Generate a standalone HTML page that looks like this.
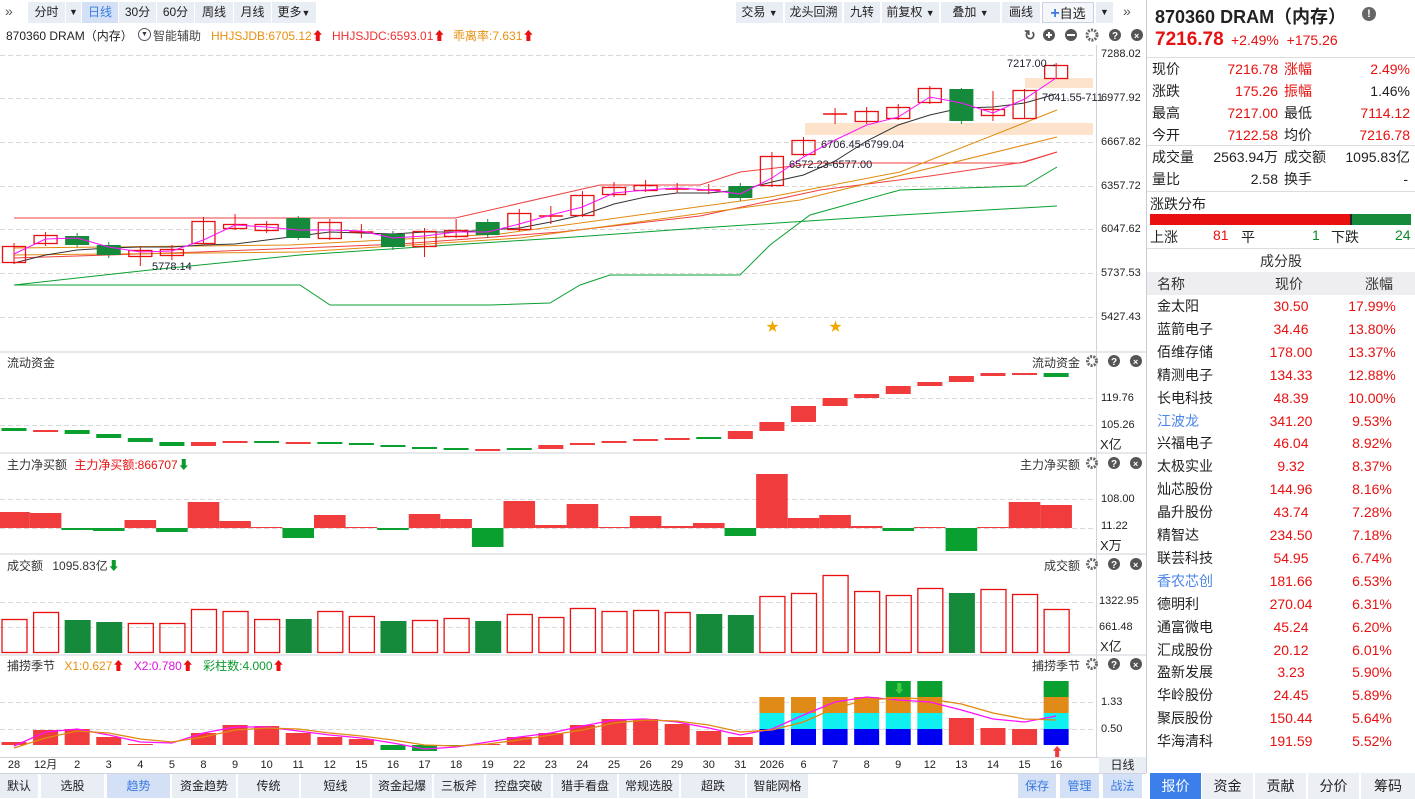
<!DOCTYPE html>
<html><head><meta charset="utf-8">
<style>
*{margin:0;padding:0;box-sizing:border-box}
body{width:1415px;height:799px;overflow:hidden;background:#fff;font-family:"Liberation Sans","Noto Sans CJK SC",sans-serif;font-size:12px;color:#222;position:relative}
.a{position:absolute;white-space:nowrap}
.tb{position:absolute;top:2px;height:21px;background:#e9edf4;font-size:12px;line-height:21px;text-align:center;color:#222}
.tb.on{background:#d3e0f6;color:#3b7be0}
.bt{position:absolute;top:774px;height:24px;background:#e9edf4;font-size:12px;line-height:24px;text-align:center;color:#222}
.bt.on{background:#d3e0f6;color:#3b7be0}
.rt{position:absolute;top:773px;height:26px;width:52px;background:#eceff4;font-size:14px;line-height:26px;text-align:center;color:#222;border-left:1px solid #fff}
.rt.on{background:#3d7fea;color:#fff}
.red{color:#e81010}.grn{color:#0a8a2c}
.row{position:absolute;left:1152px;width:260px;height:22px;font-size:14px;line-height:22px}
.row span{position:absolute}
.st{position:absolute;left:1147px;width:268px;height:23px;font-size:14px;line-height:23px}
.st span{position:absolute}
.dt{position:absolute;top:758px;width:40px;height:14px;line-height:14px;text-align:center;font-size:11px;white-space:nowrap;overflow:visible}
</style></head><body>

<div class="a" style="left:5px;top:3px;font-size:14px;color:#555">»</div>
<div class="tb" style="left:28px;width:37px">分时</div>
<div class="tb" style="left:66px;width:15px;font-size:9px">▼</div>
<div class="tb on" style="left:82px;width:36px">日线</div>
<div class="tb" style="left:119px;width:37px">30分</div>
<div class="tb" style="left:157px;width:37px">60分</div>
<div class="tb" style="left:195px;width:38px">周线</div>
<div class="tb" style="left:234px;width:37px">月线</div>
<div class="tb" style="left:272px;width:44px">更多<span style="font-size:9px">▼</span></div>

<div class="tb" style="left:736px;width:47px">交易 <span style="font-size:9px">▼</span></div>
<div class="tb" style="left:785px;width:57px">龙头回溯</div>
<div class="tb" style="left:844px;width:36px">九转</div>
<div class="tb" style="left:882px;width:57px">前复权 <span style="font-size:9px">▼</span></div>
<div class="tb" style="left:941px;width:59px">叠加 <span style="font-size:9px">▼</span></div>
<div class="tb" style="left:1002px;width:38px">画线</div>
<div class="tb" style="left:1042px;width:52px;background:#f4f6fa;border:1px solid #c8d2e2;font-size:13px"><span style="color:#3b7be0;font-size:16px;font-weight:bold">+</span>自选</div>
<div class="tb" style="left:1096px;width:17px;font-size:9px">▼</div>
<div class="a" style="left:1123px;top:3px;font-size:14px;color:#555">»</div>

<div class="a" style="left:6px;top:27px;font-size:12px">870360 DRAM（内存）</div>
<div class="a" style="left:138px;top:28px;width:13px;height:13px;border:1px solid #556;border-radius:50%;font-size:7px;line-height:11px;text-align:center;color:#334">▼</div>
<div class="a" style="left:153px;top:27px;color:#444">智能辅助</div>
<div class="a" style="left:211px;top:27px;color:#e89010">HHJSJDB:6705.12<span style="color:#e81010">⬆</span></div>
<div class="a" style="left:332px;top:27px;color:#f03030">HHJSJDC:6593.01<span style="color:#e81010">⬆</span></div>
<div class="a" style="left:453px;top:27px;color:#e89010">乖离率:7.631<span style="color:#e81010">⬆</span></div>

<svg class="a" style="left:0;top:0" width="1146" height="799" id="ch">
<g id="g"></g>
<g fill="#555">
<text x="1024" y="40" font-size="14" font-weight="bold" fill="#555">↻</text>
<circle cx="1049" cy="35" r="6"/><rect x="1046" y="34" width="6" height="2" fill="#fff"/><rect x="1048" y="32" width="2" height="6" fill="#fff"/>
<circle cx="1071" cy="35" r="6"/><rect x="1067" y="34" width="8" height="2" fill="#fff"/>
<circle cx="1092" cy="35" r="5" fill="none" stroke="#666" stroke-width="3" stroke-dasharray="2 1.2"/>
<circle cx="1115" cy="35" r="6"/><text x="1112" y="39" font-size="10" font-weight="bold" fill="#fff">?</text>
<circle cx="1137" cy="35" r="6"/><text x="1134" y="39" font-size="9" font-weight="bold" fill="#fff">×</text>
</g>
</svg>

<div class="a" style="left:1101px;top:48px;font-size:11px">7288.02</div>
<div class="a" style="left:1101px;top:92px;font-size:11px">6977.92</div>
<div class="a" style="left:1101px;top:136px;font-size:11px">6667.82</div>
<div class="a" style="left:1101px;top:180px;font-size:11px">6357.72</div>
<div class="a" style="left:1101px;top:223px;font-size:11px">6047.62</div>
<div class="a" style="left:1101px;top:267px;font-size:11px">5737.53</div>
<div class="a" style="left:1101px;top:311px;font-size:11px">5427.43</div>
<div class="a" style="left:1101px;top:392px;font-size:11px">119.76</div>
<div class="a" style="left:1101px;top:419px;font-size:11px">105.26</div>
<div class="a" style="left:1100px;top:434px;font-size:13px">X亿</div>
<div class="a" style="left:1101px;top:493px;font-size:11px">108.00</div>
<div class="a" style="left:1101px;top:520px;font-size:11px">11.22</div>
<div class="a" style="left:1100px;top:535px;font-size:13px">X万</div>
<div class="a" style="left:1099px;top:595px;font-size:11px">1322.95</div>
<div class="a" style="left:1099px;top:621px;font-size:11px">661.48</div>
<div class="a" style="left:1100px;top:636px;font-size:13px">X亿</div>
<div class="a" style="left:1101px;top:696px;font-size:11px">1.33</div>
<div class="a" style="left:1101px;top:723px;font-size:11px">0.50</div>

<div class="a" style="left:1007px;top:58px;font-size:11px;color:#223">7217.00→</div>
<div class="a" style="left:1042px;top:92px;font-size:11px;color:#223">7041.55-711</div>
<div class="a" style="left:821px;top:139px;font-size:11px;color:#223">6706.45-6799.04</div>
<div class="a" style="left:789px;top:159px;font-size:11px;color:#223">6572.23-6577.00</div>
<div class="a" style="left:152px;top:261px;font-size:11px;color:#223">5778.14</div>
<div class="a" style="left:766px;top:316px;font-size:13px;color:#f0a800">★</div>
<div class="a" style="left:829px;top:316px;font-size:13px;color:#f0a800">★</div>

<div class="a" style="left:7px;top:354px;color:#333">流动资金</div>
<div class="a" style="left:1032px;top:354px;color:#333">流动资金</div>
<div class="a" style="left:7px;top:456px;color:#333">主力净买额 <span class="red" style="margin-left:4px">主力净买额:866707</span><span style="color:#0a9a2c">⬇</span></div>
<div class="a" style="left:1020px;top:456px;color:#333">主力净买额</div>
<div class="a" style="left:7px;top:557px;color:#333">成交额 <span style="margin-left:6px">1095.83亿</span><span style="color:#0a9a2c">⬇</span></div>
<div class="a" style="left:1044px;top:557px;color:#333">成交额</div>
<div class="a" style="left:7px;top:657px;color:#333">捕捞季节 <span style="color:#e89010;margin-left:6px">X1:0.627</span><span class="red">⬆</span> <span style="color:#e010e0;margin-left:6px">X2:0.780</span><span class="red">⬆</span> <span style="color:#0a9a2c;margin-left:6px">彩柱数:4.000</span><span class="red">⬆</span></div>
<div class="a" style="left:1032px;top:657px;color:#333">捕捞季节</div>

<div id="dates"></div>
<div class="a" style="left:1099px;top:757px;width:47px;height:16px;background:#e9edf4;text-align:center;font-size:12px;line-height:16px">日线</div>

<div class="bt" style="left:0;width:38px">默认</div>
<div class="bt" style="left:41px;width:63px">选股</div>
<div class="bt on" style="left:107px;width:63px">趋势</div>
<div class="bt" style="left:172px;width:64px">资金趋势</div>
<div class="bt" style="left:238px;width:61px">传统</div>
<div class="bt" style="left:301px;width:69px">短线</div>
<div class="bt" style="left:372px;width:60px">资金起爆</div>
<div class="bt" style="left:434px;width:50px">三板斧</div>
<div class="bt" style="left:486px;width:65px">控盘突破</div>
<div class="bt" style="left:553px;width:64px">猎手看盘</div>
<div class="bt" style="left:619px;width:60px">常规选股</div>
<div class="bt" style="left:681px;width:64px">超跌</div>
<div class="bt" style="left:747px;width:61px">智能网格</div>
<div class="bt on" style="left:1018px;width:38px">保存</div>
<div class="bt on" style="left:1060px;width:39px">管理</div>
<div class="bt on" style="left:1103px;width:39px">战法</div>

<div class="a" style="left:1146px;top:0;width:1px;height:773px;background:#c8ccd4"></div>
<div class="a" style="left:1155px;top:3px;font-size:18px;font-weight:bold;color:#222">870360 DRAM（内存）</div>
<div class="a" style="left:1362px;top:7px;width:14px;height:14px;border-radius:50%;background:#666;color:#fff;font-size:11px;font-weight:bold;line-height:14px;text-align:center">!</div>
<div class="a" style="left:1155px;top:29px;font-size:19px;font-weight:bold;color:#e81010">7216.78</div>
<div class="a" style="left:1231px;top:32px;font-size:14px;color:#e81010">+2.49% &nbsp;+175.26</div>
<div class="a" style="left:1147px;top:57px;width:268px;height:1px;background:#ddd"></div>

<div class="row" style="top:58px"><span style="left:0">现价</span><span class="red" style="right:134px">7216.78</span><span class="red" style="left:132px">涨幅</span><span class="red" style="right:2px">2.49%</span></div>
<div class="row" style="top:80px"><span style="left:0">涨跌</span><span class="red" style="right:134px">175.26</span><span class="red" style="left:132px">振幅</span><span style="right:2px">1.46%</span></div>
<div class="row" style="top:102px"><span style="left:0">最高</span><span class="red" style="right:134px">7217.00</span><span style="left:132px">最低</span><span class="red" style="right:2px">7114.12</span></div>
<div class="row" style="top:124px"><span style="left:0">今开</span><span class="red" style="right:134px">7122.58</span><span style="left:132px">均价</span><span class="red" style="right:2px">7216.78</span></div>
<div class="a" style="left:1147px;top:145px;width:268px;height:1px;background:#ddd"></div>
<div class="row" style="top:146px"><span style="left:0">成交量</span><span style="right:134px">2563.94万</span><span style="left:132px">成交额</span><span style="right:2px">1095.83亿</span></div>
<div class="row" style="top:168px"><span style="left:0">量比</span><span style="right:134px">2.58</span><span style="left:132px">换手</span><span style="right:4px">-</span></div>
<div class="a" style="left:1147px;top:191px;width:268px;height:1px;background:#ddd"></div>
<div class="a" style="left:1150px;top:194px;font-size:14px">涨跌分布</div>
<div class="a" style="left:1150px;top:214px;width:200px;height:11px;background:#e81010"></div>
<div class="a" style="left:1350px;top:214px;width:2px;height:11px;background:#222"></div>
<div class="a" style="left:1352px;top:214px;width:59px;height:11px;background:#158a3a"></div>
<div class="a" style="left:1150px;top:227px;font-size:14px">上涨</div>
<div class="a red" style="left:1213px;top:227px;font-size:14px">81</div>
<div class="a" style="left:1241px;top:227px;font-size:14px">平</div>
<div class="a grn" style="left:1312px;top:227px;font-size:14px">1</div>
<div class="a" style="left:1331px;top:227px;font-size:14px">下跌</div>
<div class="a grn" style="left:1395px;top:227px;font-size:14px">24</div>
<div class="a" style="left:1147px;top:248px;width:268px;height:1px;background:#ddd"></div>
<div class="a" style="left:1147px;top:251px;width:268px;text-align:center;font-size:14px;color:#333">成分股</div>
<div class="a" style="left:1147px;top:272px;width:268px;height:23px;background:#eeeef0"></div>
<div class="a" style="left:1157px;top:274px;font-size:14px;color:#333">名称</div>
<div class="a" style="left:1275px;top:274px;font-size:14px;color:#333">现价</div>
<div class="a" style="left:1365px;top:274px;font-size:14px;color:#333">涨幅</div>
<div id="stocks"></div>

<div class="rt on" style="left:1149px">报价</div>
<div class="rt" style="left:1201px">资金</div>
<div class="rt" style="left:1254px">贡献</div>
<div class="rt" style="left:1307px">分价</div>
<div class="rt" style="left:1360px;width:55px">筹码</div>

<script>
var NS="http://www.w3.org/2000/svg",g=document.getElementById("g");
function el(t,a){var e=document.createElementNS(NS,t);for(var k in a)e.setAttribute(k,a[k]);g.appendChild(e);return e}
function X(i){return 14+i*31.58}
var R="#f03c3c",G="#158a3a",RG="#0aa030";
[352,453,554,655].forEach(function(y){el("rect",{x:0,y:y-1,width:1146,height:2,fill:"#e6e8ec"})});
el("rect",{x:1096,y:45,width:1,height:712,fill:"#d0d4da"});
el("rect",{x:0,y:757,width:1146,height:1,fill:"#d0d4da"});
el("rect",{x:0,y:773,width:1146,height:1,fill:"#d0d4da"});
[55,98,142,186,229,273,317,398,425,499,528,602,627,702,729].forEach(function(y){el("line",{x1:0,x2:1096,y1:y+.5,y2:y+.5,stroke:"#d8d8d8","stroke-dasharray":"5 3"})});
el("rect",{x:805,y:123,width:288,height:12,fill:"#fde3cc"});
el("rect",{x:1025,y:78,width:68,height:10,fill:"#fde3cc"});
function pl(p,c,w){el("polyline",{points:p,fill:"none",stroke:c,"stroke-width":w||1})}
pl("14,285 150,270 300,255 450,245 560,238 700,228 900,215 1057,206",RG);
pl("14,285 300,285 330,305 490,305 550,303 580,285 610,275 740,275 770,245 810,215 900,190 1025,186 1057,167",RG);
pl("14,218 455,218 600,185 700,185 740,172 820,163 1020,163 1057,152","#f04040");
pl("14,258 200,252 400,244 560,232 700,216 820,190 930,176 1025,162 1057,152","#f04040");
pl("14,248 290,245 500,234 770,197 900,172 1057,110","#e08a10");
pl("14,255 300,252 520,238 800,200 1057,137","#e08a10");
var bk=[263,255,250,248,247,247,245,244,240,236,232,233,234,232,232,230,228,222,215,204,197,193,193,190,182,175,161,141,125,115,108,107,103,94];
pl(bk.map(function(y,i){return X(i)+","+y}).join(" "),"#333");
var C=[[246,262,243,264,"r"],[235,243,232,246,"r"],[236,245,233,247,"g"],[245,255,242,258,"g"],[250,256,246,266,"r"],[249,255,245,260,"r"],[221,243,217,244,"r"],[224,228,214,230,"r"],[224,230,221,233,"r"],[218,238,216,240,"g"],[222,238,219,240,"r"],[231,233,224,238,"c"],[234,247,231,250,"g"],[231,246,228,257,"r"],[230,236,219,238,"r"],[222,235,219,238,"g"],[213,229,209,231,"r"],[215,217,206,224,"c"],[195,215,191,217,"r"],[187,194,182,197,"r"],[185,190,180,192,"r"],[188,190,183,193,"c"],[189,191,184,194,"c"],[186,198,183,201,"g"],[156,185,152,187,"r"],[140,154,137,156,"r"],[113,115,108,124,"c"],[111,121,107,124,"r"],[107,118,104,120,"r"],[88,102,86,104,"r"],[89,121,88,124,"g"],[109,115,91,121,"r"],[90,118,89,119,"r"],[65,78,63,78,"r"]];
C.forEach(function(c,i){var x=X(i);
 var col=c[4]=="g"?G:"#e81010";
 el("line",{x1:x,x2:x,y1:c[2],y2:c[3],stroke:col});
 if(c[4]=="g")el("rect",{x:x-12,y:c[0],width:24,height:c[1]-c[0],fill:G});
 else if(c[4]=="c")el("line",{x1:x-12,x2:x+12,y1:c[0]+1,y2:c[0]+1,stroke:col,"stroke-width":1.5});
 else el("rect",{x:x-11.5,y:c[0]+.5,width:23,height:c[1]-c[0],fill:"none",stroke:col,"stroke-width":1.3});
});
var mg=[254,239,238,247,252,251,240,225,227,230,230,231,238,236,232,232,224,215,207,193,190,188,190,194,178,157,140,125,117,97,103,113,99,78];
pl(mg.map(function(y,i){return X(i)+","+y}).join(" "),"#ff10ff");
var F=[[428,431,"g"],[430,431,"r"],[430,434,"g"],[434,438,"g"],[438,442,"g"],[442,446,"g"],[442,446,"r"],[441,442,"r"],[441,442,"g"],[442,444,"r"],[442,443,"g"],[443,445,"g"],[445,447,"g"],[447,448,"g"],[448,450,"g"],[449,450,"r"],[448,449,"g"],[445,449,"r"],[443,445,"r"],[441,443,"r"],[439,441,"r"],[438,439,"r"],[437,438,"g"],[431,439,"r"],[422,431,"r"],[406,422,"r"],[398,406,"r"],[394,398,"r"],[386,394,"r"],[382,386,"r"],[376,382,"r"],[373,376,"r"],[373,374,"r"],[373,377,"g"]];
F.forEach(function(f,i){el("rect",{x:X(i)-12.5,y:f[0],width:25,height:Math.max(2,f[1]-f[0]),fill:f[2]=="g"?RG:R})});
var N=[512,513,-530,-531,520,-532,502,521,527,-538,515,527,-530,514,519,-547,501,525,504,527,516,526,523,-536,474,518,515,526,-531,527,-551,527,502,505];
N.forEach(function(v,i){var x=X(i)-15.8;if(v>0)el("rect",{x:x,y:v,width:31.6,height:528-v,fill:R});else el("rect",{x:x,y:528,width:31.6,height:-v-528,fill:RG})});
var V=[619,612,-620,-622,623,623,609,611,619,-619,611,616,-621,620,618,-621,614,617,608,611,610,612,-614,-615,596,593,575,591,595,588,-593,589,594,609];
V.forEach(function(v,i){var x=X(i)-12.5;if(v>0)el("rect",{x:x+.5,y:v+.5,width:25,height:652-v,fill:"none",stroke:"#e81010","stroke-width":1.3});else el("rect",{x:x,y:-v,width:26,height:653+v,fill:G})});
var S=[742,730,729,737,744,745,733,725,726,733,737,739,-750,-751,-746,744,737,733,725,719,719,724,731,737,"s","s","s","s","S","S",718,728,729,"S"];
S.forEach(function(v,i){var x=X(i)-12.5;
 if(v=="s"||v=="S"){el("rect",{x:x,y:729,width:25,height:16,fill:"#0000f0"});el("rect",{x:x,y:713,width:25,height:16,fill:"#10f0f0"});el("rect",{x:x,y:697,width:25,height:16,fill:"#e08a18"});if(v=="S")el("rect",{x:x,y:681,width:25,height:16,fill:"#0aa030"});}
 else if(v>0)el("rect",{x:x,y:v,width:25,height:745-v,fill:R});
 else el("rect",{x:x,y:745,width:25,height:-v-745,fill:RG});
});
var m1=[746,732,729,735,742,743,733,727,727,731,735,738,743,749,747,742,737,733,726,720,719,722,728,735,729,715,702,697,700,702,710,719,722,716];
var m2=[748,738,731,733,739,742,737,730,728,729,733,736,740,745,746,744,740,735,730,723,720,721,725,732,730,722,708,700,698,699,704,713,719,720];
pl(m1.map(function(y,i){return X(i)+","+y}).join(" "),"#ff10ff",1.3);
pl(m2.map(function(y,i){return X(i)+","+y}).join(" "),"#e08a10",1.3);
el("text",{x:X(28)-5,y:693,fill:"#4c4","font-size":12,"font-weight":"bold"}).textContent="⬇";
el("text",{x:X(33)-5,y:756,fill:"#f03c3c","font-size":12,"font-weight":"bold"}).textContent="⬆";
var D=["28","12月","2","3","4","5","8","9","10","11","12","15","16","17","18","19","22","23","24","25","26","29","30","31","2026","6","7","8","9","12","13","14","15","16"],h="";
D.forEach(function(d,i){h+='<div class="dt" style="left:'+(X(i)-20)+'px">'+d+'</div>'});
document.getElementById("dates").innerHTML=h;
var ST=[["金太阳","30.50","17.99%"],["蓝箭电子","34.46","13.80%"],["佰维存储","178.00","13.37%"],["精测电子","134.33","12.88%"],["长电科技","48.39","10.00%"],["江波龙","341.20","9.53%",1],["兴福电子","46.04","8.92%"],["太极实业","9.32","8.37%"],["灿芯股份","144.96","8.16%"],["晶升股份","43.74","7.28%"],["精智达","234.50","7.18%"],["联芸科技","54.95","6.74%"],["香农芯创","181.66","6.53%",1],["德明利","270.04","6.31%"],["通富微电","45.24","6.20%"],["汇成股份","20.12","6.01%"],["盈新发展","3.23","5.90%"],["华岭股份","24.45","5.89%"],["聚辰股份","150.44","5.64%"],["华海清科","191.59","5.52%"]];
h="";ST.forEach(function(s,i){h+='<div class="st" style="top:'+(295+i*22.9)+'px"><span style="left:10px;color:'+(s[3]?'#4a86e8':'#222')+'">'+s[0]+'</span><span class="red" style="left:100px;width:88px;text-align:center">'+s[1]+'</span><span class="red" style="left:180px;width:90px;text-align:center">'+s[2]+'</span></div>'});
document.getElementById("stocks").innerHTML=h;
[361,463,564,664].forEach(function(y){
 el("circle",{cx:1092,cy:y,r:4.5,fill:"none",stroke:"#666","stroke-width":3,"stroke-dasharray":"2 1.2"});
 el("circle",{cx:1114,cy:y,r:6,fill:"#555"});el("text",{x:1111,y:y+4,"font-size":10,"font-weight":"bold",fill:"#fff"}).textContent="?";
 el("circle",{cx:1136,cy:y,r:6,fill:"#555"});el("text",{x:1133,y:y+4,"font-size":9,"font-weight":"bold",fill:"#fff"}).textContent="×";
});
</script>
</body></html>
